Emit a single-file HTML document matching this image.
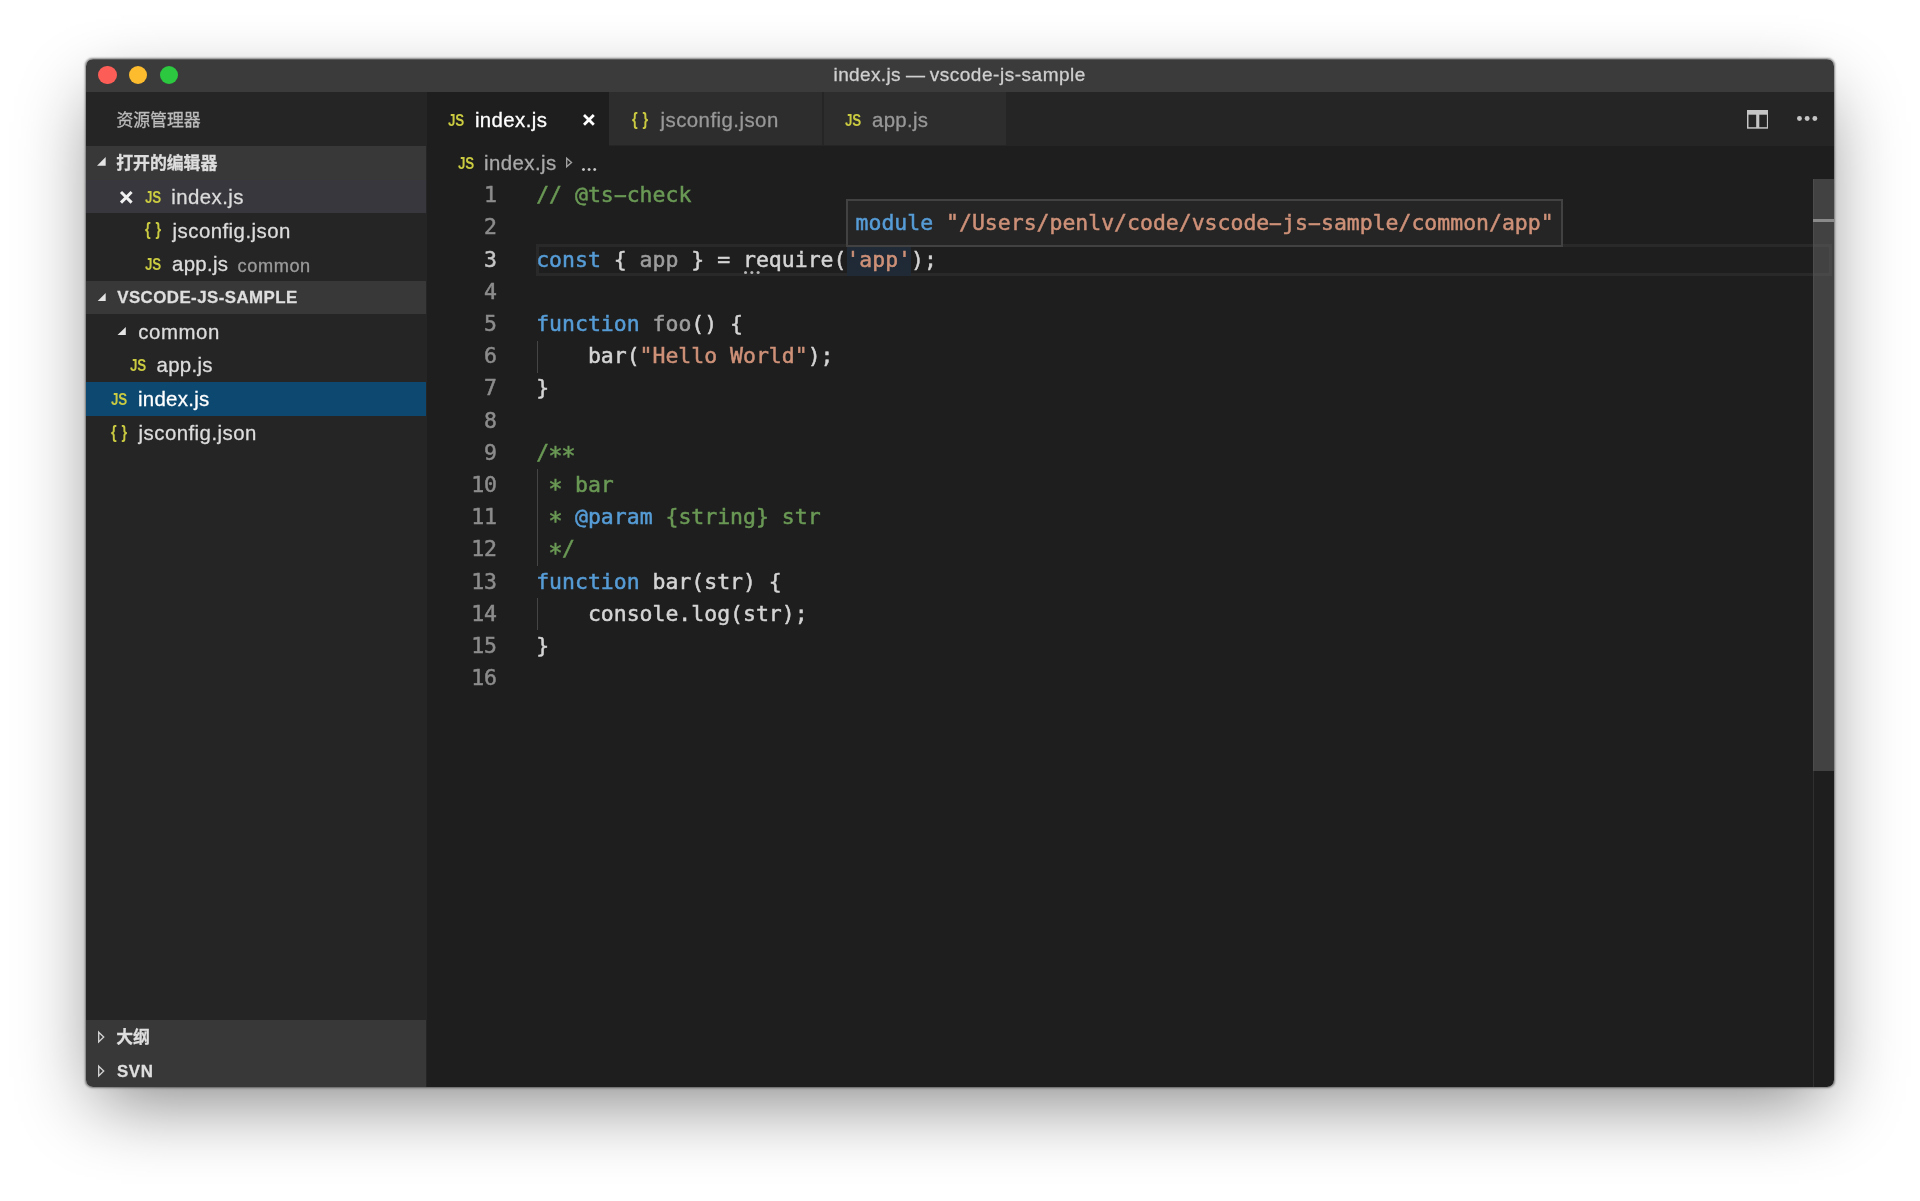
<!DOCTYPE html>
<html lang="zh-CN">
<head>
<meta charset="utf-8">
<title>index.js — vscode-js-sample</title>
<style>
*{box-sizing:border-box;margin:0;padding:0}
html,body{width:1920px;height:1201px;overflow:hidden;background:#fff}
body{position:relative;font-family:"Liberation Sans","Noto Sans CJK SC",sans-serif;color:#ccc;-webkit-font-smoothing:antialiased}
.shadow{position:absolute;left:85.9px;top:58.8px;width:1748.4px;height:1028.5px;border-radius:7px;
 box-shadow:0 0 2px .3px rgba(0,0,0,.42),0 1px 5px rgba(0,0,0,.05),0 26.4px 71.6px -10.2px rgba(0,0,0,.477)}
.win{will-change:transform;position:absolute;left:86.0px;top:59.0px;width:1748.0px;height:1028.0px;border-radius:7px;background:transparent;clip-path:inset(0 round 7px)}
.win div,.win span,.win svg{position:absolute}
.t{white-space:pre;line-height:1;-webkit-text-stroke:.3px currentColor}
.ico{-webkit-text-stroke:0 !important}
.titlebar{left:0;top:0;width:100%;height:33.24px;background:#3b3b3b}
.tl{border-radius:50%;width:18.4px;height:18.4px;top:7.3px}
.sidebar{left:0;top:33.24px;width:341.3px;bottom:0;background:#252526}
.b{font-weight:bold}
.ico{color:#cbcb41;font-weight:bold}
.code{-webkit-text-stroke:.5px currentColor;font-family:"DejaVu Sans Mono","Liberation Mono",monospace;font-size:21.47px;color:#d4d4d4;white-space:pre;line-height:32.2px;height:32.2px}
.ln{color:#8c8c8c;text-align:right}
.k{color:#569cd6}.c{color:#6a9955}.s{color:#ce9178}.u{color:#9d9d9d}
.k,.c,.s,.u{position:static!important}
.win .hy{position:static!important;display:inline-block;transform:scaleX(1.95)}
.win .a{position:relative!important;top:4.6px;font-size:1.12em;line-height:0;margin:0 -.0323em}
</style>
</head>
<body>
<div class="shadow"></div>
<div class="win">
<div style="left:0;top:0;right:0;bottom:0;background:#1e1e1e"></div>
<div class="titlebar"></div>
<div style="left:0;top:0;right:0;height:1px;background:#5a5a5a"></div>
<div class="tl" style="left:12.3px;top:7.0px;background:#fc5d57"></div>
<div class="tl" style="left:42.9px;top:7.0px;background:#fdbc2e"></div>
<div class="tl" style="left:73.6px;top:7.0px;background:#2bc840"></div>
<span class="t " style="left:747.6px;top:6.22px;font-size:19.0px;color:#cfcfcf;letter-spacing:0.37px;">index.js<span style="position:static;letter-spacing:-.3px"> — </span><span style="position:static;letter-spacing:.53px">vscode-js-sample</span></span>
<div class="sidebar"></div>
<span class="t " style="left:30.4px;top:53.71px;font-size:16.87px;color:#bbbbbb;">资源管理器</span>
<div class="" style="left:0.0px;top:86.9px;width:340.4px;height:33.79px;background:#383838;"></div>
<div class="" style="left:0.0px;top:221.7px;width:340.4px;height:33.79px;background:#383838;"></div>
<div class="" style="left:0.0px;top:960.8px;width:340.4px;height:33.79px;background:#383838;"></div>
<div class="" style="left:0.0px;top:994.5px;width:340.4px;height:33.79px;background:#383838;"></div>
<div class="" style="left:0.0px;top:120.64px;width:340.4px;height:33.74px;background:#37373d;"></div>
<div class="" style="left:0.0px;top:322.8px;width:340.4px;height:33.74px;background:#0d4871;"></div>
<span class="t b" style="left:30.2px;top:97.11px;font-size:16.87px;color:#dedede;">打开的编辑器</span>
<span class="t b" style="left:31.2px;top:231.12px;font-size:16.87px;color:#dedede;letter-spacing:0.45px;">VSCODE-JS-SAMPLE</span>
<span class="t b" style="left:30.2px;top:971.41px;font-size:16.87px;color:#dedede;">大纲</span>
<span class="t b" style="left:30.9px;top:1005.12px;font-size:16.87px;color:#dedede;letter-spacing:0.7px;">SVN</span>
<svg style="left:11.3px;top:98.3px" width="8.700000000000003" height="8.699999999999989" viewBox="0 0 8.700000000000003 8.699999999999989"><polygon points="8.700000000000003,0 8.700000000000003,8.699999999999989 0,8.699999999999989" fill="#e4e4e4"/></svg>
<svg style="left:11.3px;top:233.5px" width="8.700000000000003" height="8.699999999999989" viewBox="0 0 8.700000000000003 8.699999999999989"><polygon points="8.700000000000003,0 8.700000000000003,8.699999999999989 0,8.699999999999989" fill="#e4e4e4"/></svg>
<svg style="left:11.9px;top:971.8px;overflow:visible" width="6.599999999999994" height="12.100000000000136" viewBox="0 0 6.599999999999994 12.100000000000136"><polygon points="0.7,1.2 5.699999999999994,6.050000000000068 0.7,10.900000000000137" fill="none" stroke="#d0d0d0" stroke-width="1.4" stroke-linejoin="miter"/></svg>
<svg style="left:11.9px;top:1005.5px;overflow:visible" width="6.599999999999994" height="12.099999999999909" viewBox="0 0 6.599999999999994 12.099999999999909"><polygon points="0.7,1.2 5.699999999999994,6.0499999999999545 0.7,10.89999999999991" fill="none" stroke="#d0d0d0" stroke-width="1.4" stroke-linejoin="miter"/></svg>
<svg style="left:34.5px;top:132.61px;overflow:visible" width="10.6" height="10.6"><path d="M0 0L10.6 10.6M10.6 0L0 10.6" stroke="#f0f0f0" stroke-width="3.0" fill="none"/></svg>
<span class="t ico" style="left:58.5px;top:130.59px;font-size:16.8px;transform-origin:0 50%;transform:scaleX(.80);letter-spacing:-.2px">JS</span>
<span class="t " style="left:85.3px;top:127.94px;font-size:20.4px;color:#dcdcdc;letter-spacing:0.42px;">index.js</span>
<span class="t ico" style="left:58.7px;top:161.31px;font-size:18.6px;letter-spacing:6.3px;font-weight:bold;transform-origin:0 50%;transform:scaleX(.78)">{}</span>
<span class="t " style="left:86.6px;top:161.68px;font-size:20.4px;color:#dcdcdc;letter-spacing:0.46px;">jsconfig.json</span>
<span class="t ico" style="left:58.5px;top:198.07px;font-size:16.8px;transform-origin:0 50%;transform:scaleX(.80);letter-spacing:-.2px">JS</span>
<span class="t " style="left:86.0px;top:195.42px;font-size:20.4px;color:#dcdcdc;letter-spacing:0.3px;">app.js</span>
<span class="t " style="left:151.6px;top:197.58px;font-size:18.2px;color:#9b9b9b;letter-spacing:0.58px;">common</span>
<svg style="left:31.4px;top:267.5px" width="8.799999999999997" height="8.5" viewBox="0 0 8.799999999999997 8.5"><polygon points="8.799999999999997,0 8.799999999999997,8.5 0,8.5" fill="#e4e4e4"/></svg>
<span class="t " style="left:52.2px;top:262.74px;font-size:20.4px;color:#dcdcdc;letter-spacing:0.6px;">common</span>
<span class="t ico" style="left:44.0px;top:299.13px;font-size:16.8px;transform-origin:0 50%;transform:scaleX(.80);letter-spacing:-.2px">JS</span>
<span class="t " style="left:70.6px;top:296.48px;font-size:20.4px;color:#dcdcdc;letter-spacing:0.3px;">app.js</span>
<span class="t ico" style="left:25.2px;top:332.87px;font-size:16.8px;transform-origin:0 50%;transform:scaleX(.80);letter-spacing:-.2px">JS</span>
<span class="t " style="left:52.0px;top:330.22px;font-size:20.4px;color:#ffffff;letter-spacing:0.3px;">index.js</span>
<span class="t ico" style="left:25.0px;top:363.59px;font-size:18.6px;letter-spacing:6.3px;font-weight:bold;transform-origin:0 50%;transform:scaleX(.78)">{}</span>
<span class="t " style="left:52.6px;top:363.96px;font-size:20.4px;color:#dcdcdc;letter-spacing:0.46px;">jsconfig.json</span>
<div class="" style="left:340.4px;top:33.24px;width:1407.6px;height:53.68px;background:#252526;"></div>
<div class="" style="left:341.3px;top:33.24px;width:181.9px;height:53.68px;background:#1e1e1e;"></div>
<div class="" style="left:523.2px;top:33.24px;width:213.0px;height:53.08px;background:#2d2d2d;"></div>
<div class="" style="left:737.6px;top:33.24px;width:182.3px;height:53.08px;background:#2d2d2d;"></div>
<span class="t ico" style="left:362.2px;top:54.08px;font-size:16.8px;transform-origin:0 50%;transform:scaleX(.80);letter-spacing:-.2px">JS</span>
<span class="t " style="left:388.9px;top:50.73px;font-size:20.4px;color:#ffffff;letter-spacing:0.42px;">index.js</span>
<svg style="left:498.0px;top:56.1px;overflow:visible" width="9.8" height="9.8"><path d="M0 0L9.8 9.8M9.8 0L0 9.8" stroke="#ffffff" stroke-width="2.8" fill="none"/></svg>
<span class="t ico" style="left:546.1px;top:51.36px;font-size:18.6px;letter-spacing:6.3px;font-weight:bold;transform-origin:0 50%;transform:scaleX(.78)">{}</span>
<span class="t " style="left:574.5px;top:50.73px;font-size:20.4px;color:#989898;letter-spacing:0.46px;">jsconfig.json</span>
<span class="t ico" style="left:758.8px;top:54.08px;font-size:16.8px;transform-origin:0 50%;transform:scaleX(.80);letter-spacing:-.2px">JS</span>
<span class="t " style="left:786.0px;top:50.73px;font-size:20.4px;color:#989898;letter-spacing:0.3px;">app.js</span>
<svg style="left:1660.7px;top:51.3px" width="21.4" height="18.8" viewBox="0 0 21.4 18.8"><rect x="0.75" y="0.75" width="19.9" height="17.2" fill="none" stroke="#c5c5c5" stroke-width="1.5"/><rect x="0" y="0" width="21.4" height="4.7" fill="#c5c5c5"/><rect x="9.2" y="1" width="3.1" height="17" fill="#c5c5c5"/></svg>
<svg style="left:1710.05px;top:56.45px" width="22.3" height="6.9" viewBox="0 0 22.3 6.9"><circle cx="3.45" cy="3.45" r="2.45" fill="#c5c5c5"/><circle cx="11.15" cy="3.45" r="2.45" fill="#c5c5c5"/><circle cx="18.85" cy="3.45" r="2.45" fill="#c5c5c5"/></svg>
<span class="t ico" style="left:371.8px;top:96.68px;font-size:16.8px;transform-origin:0 50%;transform:scaleX(.80);letter-spacing:-.2px">JS</span>
<span class="t " style="left:398.1px;top:94.03px;font-size:20.4px;color:#a9a9a9;letter-spacing:0.42px;">index.js</span>
<svg style="left:479.6px;top:98.4px;overflow:visible" width="6.399999999999977" height="11.0" viewBox="0 0 6.399999999999977 11.0"><polygon points="0.7,1.2 5.499999999999977,5.5 0.7,9.8" fill="none" stroke="#a0a0a0" stroke-width="1.4" stroke-linejoin="miter"/></svg>
<svg style="left:494.9px;top:107.7px" width="16.2" height="5.0" viewBox="0 0 16.2 5.0"><circle cx="2.5" cy="2.5" r="1.5" fill="#c8c8c8"/><circle cx="8.1" cy="2.5" r="1.5" fill="#c8c8c8"/><circle cx="13.7" cy="2.5" r="1.5" fill="#c8c8c8"/></svg>
<div style="left:450.3px;top:185.0px;width:1295.3px;height:32px;border:3px solid #292929"></div>
<div class="" style="left:760.52px;top:185.06px;width:64.65px;height:31.6px;background:#1f2a36;"></div>
<div class="" style="left:451.0px;top:281.66px;width:1.2px;height:32.2px;background:#454545;"></div>
<div class="" style="left:451.0px;top:410.46px;width:1.2px;height:96.6px;background:#454545;"></div>
<div class="" style="left:451.0px;top:539.26px;width:1.2px;height:32.2px;background:#454545;"></div>
<div class="code ln" style="left:351.0px;top:120.26px;width:60px">1</div>
<div class="code" style="left:450.2px;top:120.26px"><span class="c">// @ts<span class="hy">-</span>check</span></div>
<div class="code ln" style="left:351.0px;top:152.46px;width:60px">2</div>
<div class="code ln" style="left:351.0px;top:184.66px;width:60px;color:#c6c6c6">3</div>
<div class="code" style="left:450.2px;top:184.66px"><span class="k">const</span> { <span class="u">app</span> } = require(<span class="s">'app'</span>);</div>
<div class="code ln" style="left:351.0px;top:216.86px;width:60px">4</div>
<div class="code ln" style="left:351.0px;top:249.06px;width:60px">5</div>
<div class="code" style="left:450.2px;top:249.06px"><span class="k">function</span> <span class="u">foo</span>() {</div>
<div class="code ln" style="left:351.0px;top:281.26px;width:60px">6</div>
<div class="code" style="left:450.2px;top:281.26px">    bar(<span class="s">"Hello World"</span>);</div>
<div class="code ln" style="left:351.0px;top:313.46px;width:60px">7</div>
<div class="code" style="left:450.2px;top:313.46px">}</div>
<div class="code ln" style="left:351.0px;top:345.66px;width:60px">8</div>
<div class="code ln" style="left:351.0px;top:377.86px;width:60px">9</div>
<div class="code" style="left:450.2px;top:377.86px"><span class="c">/<span class="a">*</span><span class="a">*</span></span></div>
<div class="code ln" style="left:351.0px;top:410.06px;width:60px">10</div>
<div class="code" style="left:450.2px;top:410.06px"><span class="c"> <span class="a">*</span> bar</span></div>
<div class="code ln" style="left:351.0px;top:442.26px;width:60px">11</div>
<div class="code" style="left:450.2px;top:442.26px"><span class="c"> <span class="a">*</span> </span><span class="k">@param</span><span class="c"> {string} str</span></div>
<div class="code ln" style="left:351.0px;top:474.46px;width:60px">12</div>
<div class="code" style="left:450.2px;top:474.46px"><span class="c"> <span class="a">*</span>/</span></div>
<div class="code ln" style="left:351.0px;top:506.66px;width:60px">13</div>
<div class="code" style="left:450.2px;top:506.66px"><span class="k">function</span> bar(str) {</div>
<div class="code ln" style="left:351.0px;top:538.86px;width:60px">14</div>
<div class="code" style="left:450.2px;top:538.86px">    console.log(str);</div>
<div class="code ln" style="left:351.0px;top:571.06px;width:60px">15</div>
<div class="code" style="left:450.2px;top:571.06px">}</div>
<div class="code ln" style="left:351.0px;top:603.26px;width:60px">16</div>
<svg style="left:656.55px;top:211.45px" width="17.7" height="5.1" viewBox="0 0 17.7 5.1"><circle cx="2.55" cy="2.55" r="1.55" fill="#b4b4b4"/><circle cx="8.85" cy="2.55" r="1.55" fill="#b4b4b4"/><circle cx="15.15" cy="2.55" r="1.55" fill="#b4b4b4"/></svg>
<div class="" style="left:1726.5px;top:120.36px;width:1.2px;height:907.64px;background:#303030;"></div>
<div class="" style="left:1727.2px;top:120.36px;width:20.8px;height:591.84px;background:rgba(121,121,121,.4);"></div>
<div class="" style="left:1727.2px;top:160.4px;width:20.8px;height:3.0px;background:#8a8a8a;"></div>
<div style="left:760.2px;top:140.2px;width:716.8px;height:47.9px;background:#252526;border:2px solid #424242"></div>
<div class="code" style="left:769.6px;top:148.1px"><span class="k">module</span> <span class="s">"/Users/penlv/code/vscode<span class="hy">-</span>js<span class="hy">-</span>sample/common/app"</span></div>
</div>
</body>
</html>
